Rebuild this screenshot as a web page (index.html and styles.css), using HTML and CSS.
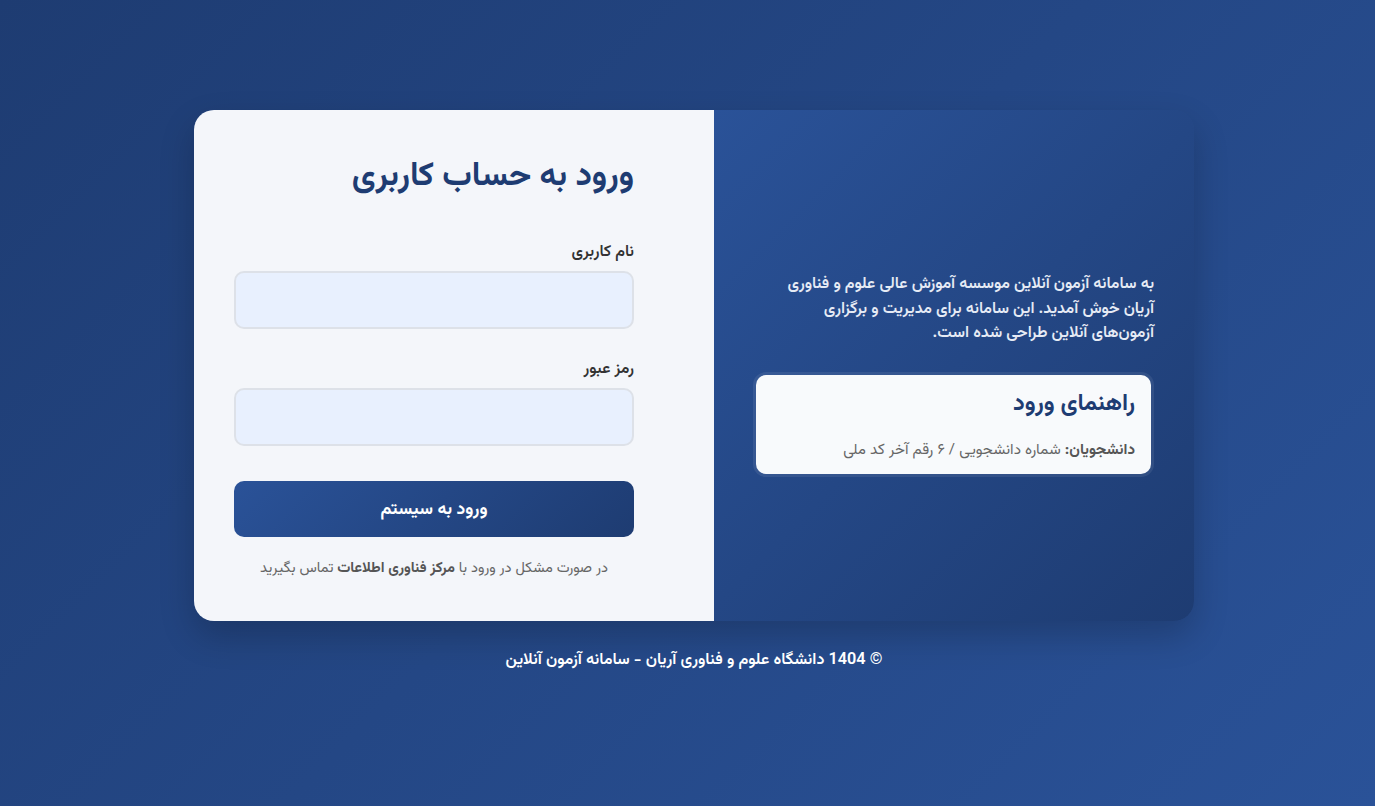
FILE: index.html
```html
<!DOCTYPE html>
<html lang="fa" dir="rtl">
<head>
<meta charset="utf-8">
<title>ورود به حساب کاربری</title>
<link rel="stylesheet" href="styles.css">
</head>
<body>
<main class="page">
  <div class="card">
    <aside class="info">
      <p class="intro">به سامانه آزمون آنلاین موسسه آموزش عالی علوم و فناوری آریان خوش آمدید. این سامانه برای مدیریت و برگزاری آزمون‌های آنلاین طراحی شده است.</p>
      <div class="guide">
        <h2 class="guide-title">راهنمای ورود</h2>
        <p class="guide-text"><b>دانشجویان:</b> شماره دانشجویی / ۶ رقم آخر کد ملی</p>
      </div>
    </aside>
    <section class="login">
      <h1 class="title">ورود به حساب کاربری</h1>
      <form class="form">
        <label class="field">
          <span class="label">نام کاربری</span>
          <input class="input" type="text">
        </label>
        <label class="field">
          <span class="label">رمز عبور</span>
          <input class="input" type="password">
        </label>
        <button class="btn" type="button">ورود به سیستم</button>
      </form>
      <p class="help">در صورت مشکل در ورود با <b>مرکز فناوری اطلاعات</b> تماس بگیرید</p>
    </section>
  </div>
  <footer class="copy">© 1404 دانشگاه علوم و فناوری آریان - سامانه آزمون آنلاین</footer>
</main>
</body>
</html>
```
FILE: styles.css
```css
* { box-sizing: border-box; }
html, body { height: 100%; }
body {
  margin: 0;
  font-family: "Vazirmatn", "Noto Sans Arabic", "DejaVu Sans", sans-serif;
  background: linear-gradient(135deg, #1e3c72 0%, #2a5298 100%);
  color: #333;
}
.page {
  min-height: 100%;
  display: flex;
  flex-direction: column;
  align-items: center;
  padding-top: 110px;
  padding-left: 13px;
}
.card {
  width: 1000px;
  height: 511px;
  display: flex;
  border-radius: 20px;
  overflow: hidden;
  box-shadow: 0 15px 35px rgba(0, 0, 0, 0.2);
}
.login {
  width: 520px;
  background: #f4f6fa;
  padding: 40px 80px 0 40px;
}
.title {
  margin: 7px 0 0;
  font-size: 33px;
  font-weight: 700;
  color: #1e3c72;
  line-height: 40px;
}
.form {
  margin-top: 46px;
  display: flex;
  flex-direction: column;
}
.field {
  display: flex;
  flex-direction: column;
  margin-bottom: 31px;
}
.label {
  font-size: 16px;
  font-weight: 600;
  color: #333;
  line-height: 20px;
  margin-bottom: 8px;
}
.input {
  height: 58px;
  border: 2px solid #dde1e8;
  border-radius: 10px;
  background: #e8f0fe;
  font: inherit;
  padding: 0 15px;
}
.btn {
  margin-top: 4px;
  height: 56px;
  border: 0;
  border-radius: 10px;
  background: linear-gradient(135deg, #2a5298 0%, #1e3c72 100%);
  color: #fff;
  font: inherit;
  font-size: 17.5px;
  font-weight: 700;
}
.help {
  margin: 20px 0 0;
  text-align: center;
  font-size: 14.6px;
  color: #666;
}
.help b { color: #555; }
.info {
  width: 480px;
  background: linear-gradient(135deg, #2a5298 0%, #1e3c72 100%);
  padding: 16px 40px 0;
  display: flex;
  flex-direction: column;
  justify-content: center;
}
.intro {
  margin: 0 0 0 15px;
  font-size: 16px;
  font-weight: 600;
  line-height: 24.5px;
  color: #e6ebf5;
}
.guide {
  margin-top: 28px;
  margin-left: 2px;
  margin-right: 3px;
  background: #f8fafc;
  border-radius: 10px;
  padding: 12px 16px 12px;
  box-shadow: 0 0 0 3px rgba(255, 255, 255, 0.08);
}
.guide-title {
  margin: 0;
  font-size: 23.5px;
  font-weight: 700;
  line-height: 36px;
  color: #1e3c72;
}
.guide-text {
  margin: 15px 0 0;
  font-size: 15.2px;
  color: #666;
}
.guide-text b { color: #555; }
.copy {
  margin-top: 26px;
  color: #fff;
  font-size: 16.2px;
  font-weight: 600;
}
```
